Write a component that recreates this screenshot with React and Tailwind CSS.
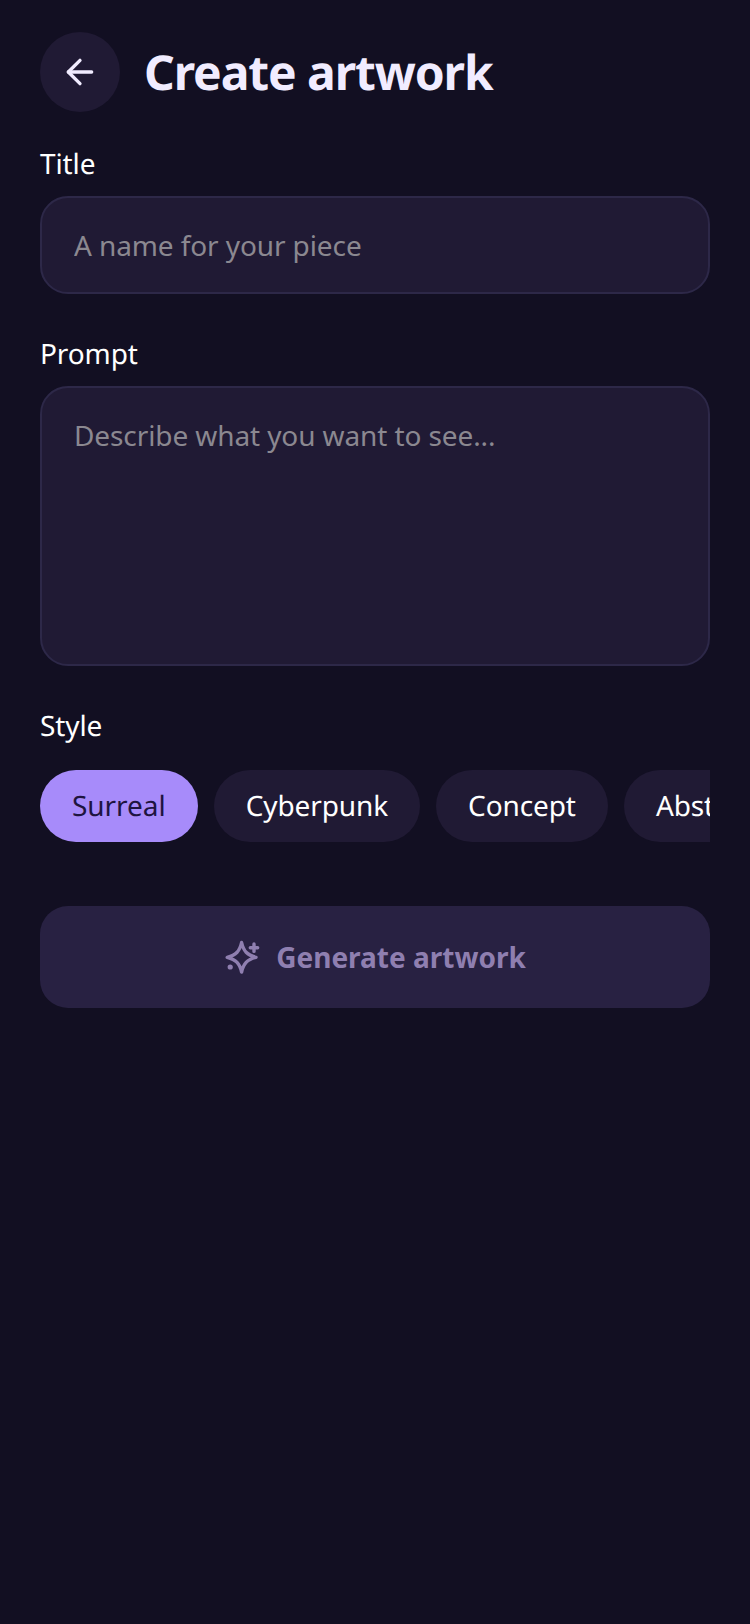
import React from "react";
import { ArrowLeft } from "lucide-react";

const styles = ["Surreal", "Cyberpunk", "Concept", "Abstract", "Portrait"];

function SparkIcon() {
	return (
		<svg width="40" height="40" viewBox="0 0 40 40" fill="none" stroke="currentColor" strokeWidth="3.4" strokeLinecap="round" strokeLinejoin="round">
			<path d="M17.6 5.5C19.5 14 23 18 32 20.3C23 22.6 19.5 26.6 17.6 35C15.7 26.6 12.2 22.6 3.2 20.3C12.2 18 15.7 14 17.6 5.5Z" />
			<path d="M30 7V14.4M26.3 10.7H33.7" />
			<circle cx="6.2" cy="30" r="2.6" fill="currentColor" stroke="none" />
		</svg>
	);
}

function App() {
	return (
		<div className="min-h-[1624px] bg-[#120f22] px-10 pt-8 font-['Noto_Sans',sans-serif] tracking-[-0.1px] text-white [text-rendering:geometricPrecision]">
			{/* Header */}
			<div className="flex items-center gap-6">
				<button className="flex h-20 w-20 items-center justify-center rounded-full bg-[#201a34]">
					<ArrowLeft size={40} strokeWidth={2} className="text-[#f1ecff]" />
				</button>
				<h1 className="pt-[2px] text-[48px] leading-[64px] font-bold tracking-[-1.1px] text-[#f1ecff]">Create artwork</h1>
			</div>

			{/* Title */}
			<label className="mt-8 mb-3 block text-[28px] leading-[40px]">Title</label>
			<input
				placeholder="A name for your piece"
				className="block h-[98px] w-full rounded-[28px] border-2 border-[#2d2848] bg-[#201a34] px-8 text-[28px] outline-none placeholder:text-[#8b8890]"
			/>

			{/* Prompt */}
			<label className="mt-10 mb-3 block text-[28px] leading-[40px]">Prompt</label>
			<textarea
				placeholder="Describe what you want to see..."
				className="block h-[280px] w-full resize-none rounded-[28px] border-2 border-[#2d2848] bg-[#201a34] px-8 py-[27px] text-[28px] leading-[40px] outline-none placeholder:text-[#8b8890]"
			/>

			{/* Style */}
			<label className="mt-10 mb-6 block text-[28px] leading-[40px]">Style</label>
			<div className="flex gap-4 overflow-hidden">
				{styles.map((s, i) => (
					<div
						key={s}
						className={
							i === 0
								? "flex h-[72px] shrink-0 items-center rounded-full bg-[#a78bfa] px-8 text-[28px] tracking-[-0.05px] text-[#1e1440]"
								: "flex h-[72px] shrink-0 items-center rounded-full bg-[#201a34] px-8 text-[28px] text-white"
						}
					>
						{s}
					</div>
				))}
			</div>

			{/* Generate */}
			<button className="mt-16 flex h-[102px] w-full items-center justify-center gap-3 rounded-[28px] bg-[#282142] text-[28px] font-bold tracking-normal text-[#8f7fb0]">
				<SparkIcon />
				Generate artwork
			</button>
		</div>
	);
}

export default App;
